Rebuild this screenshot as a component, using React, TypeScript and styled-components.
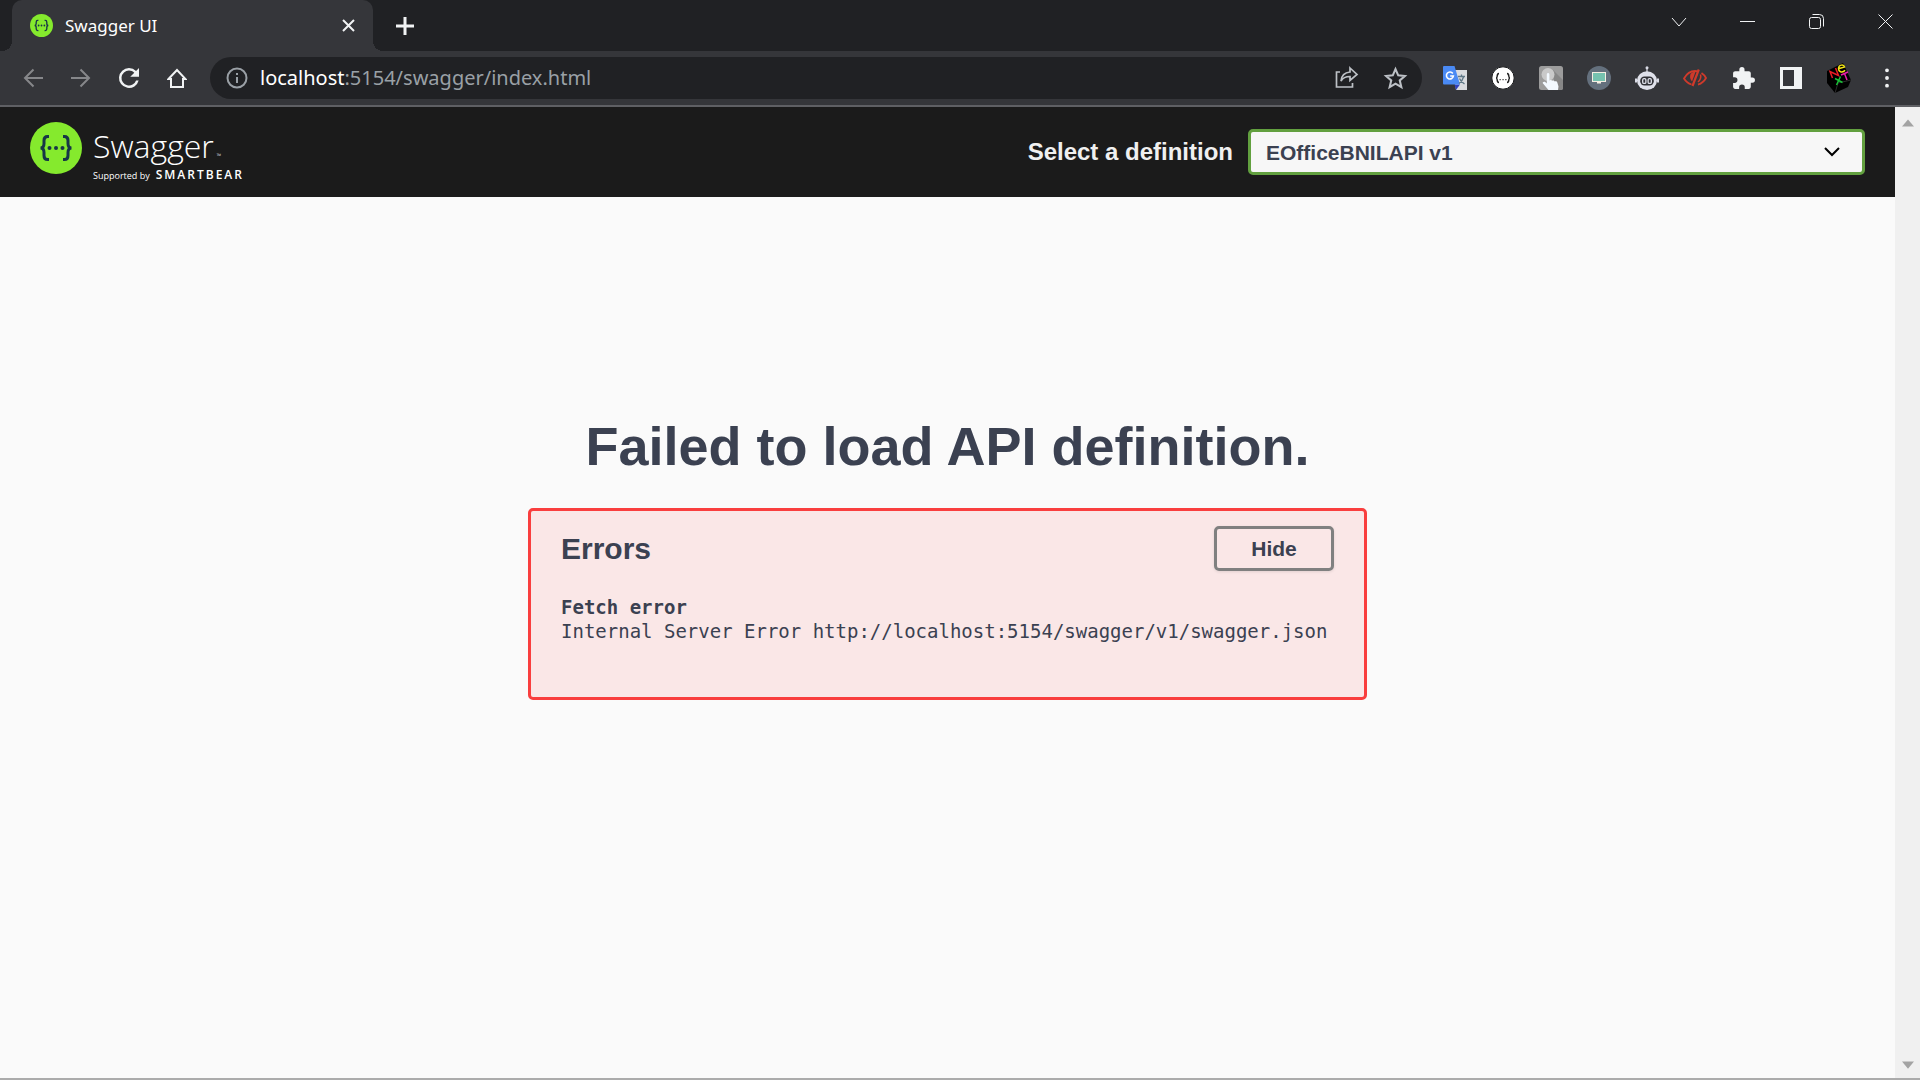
import React, { useState } from 'react';
import styled, { createGlobalStyle } from 'styled-components';

const GlobalStyle = createGlobalStyle`
  *, *::before, *::after { box-sizing: border-box; }
  html, body { margin: 0; height: 100%; }
  #root { height: 100%; }
  body { background: #202124; overflow: hidden; }
  button { font: inherit; color: inherit; }
`;

const ui = `'Segoe UI', 'Noto Sans', 'Open Sans', sans-serif`;
const sans = `'Liberation Sans', Arial, sans-serif`;
const mono = `'DejaVu Sans Mono', monospace`;

const Window = styled.div`
  display: flex;
  flex-direction: column;
  height: 100%;
  font-family: ${ui};
  border-bottom: 2px solid #ababab;
`;

const TabStrip = styled.header`
  display: flex;
  align-items: stretch;
  flex: none;
  height: 51px;
  padding-left: 12px;
  background: #202124;
  color: #fff;
`;

const Tab = styled.div`
  position: relative;
  display: flex;
  align-items: center;
  width: 361px;
  padding: 0 13px 0 18px;
  border-radius: 10px 10px 0 0;
  background: #35363a;
  &::before, &::after {
    content: '';
    position: absolute;
    bottom: 0;
    width: 10px;
    height: 10px;
  }
  &::before {
    right: 100%;
    background: radial-gradient(circle at 0 0, #202124 10px, #35363a 10px);
  }
  &::after {
    left: 100%;
    background: radial-gradient(circle at 100% 0, #202124 10px, #35363a 10px);
  }
`;

const TabTitle = styled.span`
  flex: 1;
  margin-left: 12px;
  font-size: 17px;
  line-height: 24px;
`;

const IconButton = styled.button<{ $w?: number; $color?: string }>`
  display: flex;
  align-items: center;
  justify-content: center;
  flex: none;
  width: ${(p) => p.$w ?? 48}px;
  padding: 0;
  border: 0;
  background: none;
  color: ${(p) => p.$color ?? '#f1f3f4'};
  svg { display: block; }
`;

const NewTab = styled(IconButton)`
  margin-left: 8px;
`;

const WindowControls = styled.div`
  display: flex;
  height: 43px;
  margin-left: auto;
`;

const Toolbar = styled.nav`
  display: flex;
  align-items: stretch;
  flex: none;
  height: 56px;
  padding: 6px 9px;
  border-bottom: 2px solid #5f6064;
  background: #35363a;
`;

const Address = styled.form`
  display: flex;
  align-items: center;
  flex: 1;
  margin: 0 9px;
  padding: 0 3px 0 16px;
  border-radius: 21px;
  background: #202124;
  color: #9aa0a6;
`;

const Url = styled.a`
  flex: 1;
  margin-left: 12px;
  color: #9aa0a6;
  font-size: 20px;
  line-height: 28px;
  text-decoration: none;
  strong { color: #fff; font-weight: 400; }
`;

const Viewport = styled.div`
  display: flex;
  flex: 1;
  min-height: 0;
`;

const Page = styled.main`
  flex: 1;
  background: #fafafa;
  color: #3b4151;
  font-family: ${sans};
`;

const Scrollbar = styled.div`
  display: flex;
  flex-direction: column;
  justify-content: space-between;
  align-items: center;
  width: 25px;
  padding: 10px 0 8px;
  background: #f0f0f0;
  color: #a3a3a3;
  svg { display: block; }
`;

const Topbar = styled.div`
  display: flex;
  align-items: center;
  justify-content: space-between;
  height: 90px;
  padding: 0 30px;
  background: #1b1b1b;
`;

const Logo = styled.a`
  display: flex;
  color: #fff;
  text-decoration: none;
`;

const LogoWords = styled.span`
  display: flex;
  flex-direction: column;
  margin-left: 11px;
  padding-top: 2px;
  font-family: 'Open Sans', sans-serif;
`;

const LogoName = styled.span`
  display: flex;
  align-items: baseline;
  gap: 3px;
  font-size: 32px;
  font-weight: 300;
  line-height: 44px;
  small { font-size: 6px; line-height: 8px; }
`;

const LogoBy = styled.span`
  display: flex;
  align-items: baseline;
  gap: 6px;
  font-size: 9px;
  line-height: 14px;
  strong { font-size: 12px; font-weight: 600; letter-spacing: 2px; }
`;

const Definition = styled.label`
  display: flex;
  align-items: center;
  gap: 15px;
  color: #f0f0f0;
  font-size: 24px;
  font-weight: 700;
`;

const SelectFrame = styled.span`
  display: grid;
  align-items: center;
  width: 617px;
  color: #000;
  > * { grid-area: 1 / 1; }
  > svg { justify-self: end; margin-right: 25px; pointer-events: none; }
`;

const Select = styled.select`
  appearance: none;
  width: 100%;
  height: 46px;
  padding: 0 50px 0 15px;
  border: 3px solid #62a03f;
  border-radius: 5px;
  background: #f7f7f7;
  color: #3b4151;
  font-family: ${sans};
  font-size: 21px;
  font-weight: 700;
`;

const Failure = styled.section`
  display: flex;
  flex-direction: column;
  align-items: center;
  padding-top: 217px;
`;

const Title = styled.h1`
  margin: 0;
  font-size: 54px;
  line-height: 64px;
`;

const ErrorBox = styled.div`
  min-width: 839px;
  margin-top: 30px;
  padding: 15px 30px 54px;
  border: 3px solid #f93e3e;
  border-radius: 5px;
  background: #fae7e7;
`;

const ErrorHead = styled.div`
  display: flex;
  align-items: center;
  justify-content: space-between;
`;

const ErrorTitle = styled.h2`
  margin: 0;
  font-size: 30px;
  line-height: 36px;
`;

const HideButton = styled.button`
  width: 120px;
  height: 45px;
  border: 3px solid #808080;
  border-radius: 5px;
  background: transparent;
  box-shadow: 0 1px 3px rgba(0, 0, 0, 0.1);
  font-size: 21px;
  font-weight: 700;
`;

const ErrorText = styled.p`
  margin: 24px 0 0;
  font-family: ${mono};
  font-size: 19px;
  line-height: 24px;
  strong { display: block; }
`;

type IconProps = { size?: number };

const SwaggerMark = ({ size = 52 }: IconProps) => (
  <svg width={size} height={size} viewBox="0 0 52 52" aria-hidden="true">
    <circle cx="26" cy="26" r="26" fill="#85ea2d" />
    <g fill="none" stroke="#173647" strokeWidth="3">
      <path d="M19 14.5h-1.500c-3 0-3.500 1.500-3.500 4v3c0 3-1 4.500-3.500 4.500 2.500 0 3.500 1.500 3.500 4.500v3c0 2.500.5 4 3.500 4H19" />
      <path d="M33 14.500h1.500c3 0 3.500 1.500 3.500 4v3c0 3 1 4.500 3.500 4.500-2.500 0-3.500 1.500-3.500 4.500v3c0 2.500-.5 4-3.500 4H33" />
    </g>
    <g fill="#173647">
      <circle cx="19.500" cy="26" r="2" /><circle cx="26" cy="26" r="2" /><circle cx="32.500" cy="26" r="2" />
    </g>
  </svg>
);

const Glyph = ({ d, size = 24, width = 2, box = 24, fill = 'none' }: { d: string; size?: number; width?: number; box?: number; fill?: string }) => (
  <svg width={size} height={size} viewBox={`0 0 ${box} ${box}`} fill={fill} stroke={fill === 'none' ? 'currentColor' : 'none'} strokeWidth={width} aria-hidden="true">
    <path d={d} fillRule="evenodd" />
  </svg>
);

const TranslateIcon = () => (
  <svg width="24" height="24" viewBox="0 0 24 24" aria-hidden="true">
    <path d="M10 4h14v20H13z" fill="#dadce0" />
    <path d="M11.500 18.500h5.500l-4 5.500z" fill="#3041be" />
    <path d="M1 0h10.500l5.500 18.500H1a1 1 0 0 1-1-1V1a1 1 0 0 1 1-1z" fill="#4a8af4" />
    <path d="M9.800 7.500A3.500 3.500 0 1 0 10.400 10H7.200" fill="none" stroke="#fff" strokeWidth="1.600" />
    <path d="M15 10.500h7M18.500 8.500v2M20.500 11c-.7 3-2.500 5-4.500 6.500M16.500 12.500c1 2.500 3 4 5 5.500" fill="none" stroke="#607988" strokeWidth="1.300" />
  </svg>
);

const BracesIcon = () => (
  <svg width="24" height="24" viewBox="0 0 24 24" aria-hidden="true">
    <circle cx="12" cy="12" r="11.200" fill="#fff" stroke="#17181a" strokeWidth="1" />
    <path d="M8 7.500c-3 0-.7 4.500-3 4.500 2.300 0 0 4.500 3 4.500M16 7.500c3 0 .7 4.500 3 4.500-2.300 0 0 4.500-3 4.500" fill="none" stroke="#222" strokeWidth="1.500" />
    <path d="M8.500 13h1.300v1.300H8.500zM11.400 13h1.300v1.300h-1.300zM14.200 13h1.300v1.300h-1.300z" fill="#444" />
  </svg>
);

const TouchIcon = () => (
  <svg width="24" height="24" viewBox="0 0 24 24" aria-hidden="true">
    <rect width="24" height="24" rx="2.500" fill="#9c9c9c" />
    <path d="M14 4l10 10v8a2 2 0 0 1-2 2h-6z" fill="#868686" />
    <circle cx="9" cy="8.500" r="6.500" fill="#c9c9c9" />
    <path d="M7.800 8.500c0-2 2.600-2 2.600 0v6c.6-.9 2.400-.8 2.700.3.700-.7 2.200-.5 2.500.6.900-.6 2.500-.2 2.700 1.200l1.200 3.900-.5 3.500H9.500L4 17.600c-1-1.500 1-2.600 2.200-1.500l1.600 1.400z" fill="#f3f9ff" />
  </svg>
);

const ScreenIcon = () => (
  <svg width="24" height="24" viewBox="0 0 24 24" aria-hidden="true">
    <circle cx="12" cy="12" r="12" fill="#64707d" />
    <rect x="5" y="6" width="14" height="10" fill="#f4eee2" />
    <rect x="6" y="7" width="12" height="8" fill="#76c2af" />
    <path d="M10 16h4v1.500h-4z" fill="#f4eee2" />
  </svg>
);

const BotIcon = () => (
  <svg width="24" height="24" viewBox="0 0 24 24" aria-hidden="true">
    <path d="M12 1v5" stroke="#dadce6" strokeWidth="1.200" />
    <circle cx="12" cy="1.700" r="1.500" fill="#dadce6" />
    <ellipse cx="12" cy="14.600" rx="10" ry="9.300" fill="#dfe1ea" />
    <path d="M0 12.500h2v4H0zM22 12.500h2v4h-2z" fill="#dadce6" />
    <rect x="5.200" y="10.500" width="13.600" height="9" rx="4.200" fill="#303136" />
    <rect x="7.700" y="12.700" width="3.200" height="4.700" rx="1.200" fill="none" stroke="#dfe1ea" strokeWidth="1.300" />
    <rect x="13.100" y="12.700" width="3.200" height="4.700" rx="1.200" fill="none" stroke="#dfe1ea" strokeWidth="1.300" />
  </svg>
);

const HiddenEyeIcon = () => (
  <svg width="24" height="24" viewBox="0 0 24 24" fill="none" stroke="#cf3a2b" strokeWidth="1.800" aria-hidden="true">
    <path d="M8.500 18.500C5 17.500 2.500 15 1 12.500 3.500 8 7.500 5 12 5c1 0 2 .1 3 .4M18.500 7c2 1.300 3.500 3 4.500 5-1.800 3.300-4.500 5.500-8 6.700" />
    <path d="M15.800 3.500L9.500 20" strokeWidth="2.200" />
    <path d="M7.500 8c.8-1.500 3-2.500 5-2.300L9 15.500C7 13.500 6.700 10.500 7.500 8z" fill="#cf3a2b" stroke="none" />
    <path d="M17.500 8.500c.8 3-.3 5.500-2.500 7.500" strokeWidth="1.500" />
  </svg>
);

const NextIcon = () => (
  <svg width="26" height="32" viewBox="0 0 26 32" fill="none" strokeWidth="1.500" aria-hidden="true">
    <path d="M1 9L17 1l8 17-3 7L9 31 1 21z" fill="#000" />
    <path d="M9 31l3-10 13-3" stroke="#2c2c2c" strokeWidth="1" />
    <path d="M6.500 16L4 9.500l8.500 4L9.500 6" stroke="#ea1c24" />
    <path d="M12.500 6.800l6-1.800c-.8-3-5.800-2.500-6 1.500.2 4 4.500 4.500 6.500 1.800" stroke="#f2e416" />
    <path d="M15 13l7-3M18.500 11.500l2.500 6.500" stroke="#e81caa" />
    <path d="M9 16.500l7.500 4M14.500 14.500L10.500 23" stroke="#19c337" />
  </svg>
);

const puzzle = 'M20.500 11H19V7c0-1.100-.9-2-2-2h-4V3.500a2.500 2.500 0 0 0-5 0V5H4c-1.100 0-2 .9-2 2v3.800h1.500a2.700 2.700 0 0 1 0 5.400H2V20c0 1.100.9 2 2 2h3.800v-1.500a2.700 2.700 0 0 1 5.400 0V22H17c1.100 0 2-.9 2-2v-4h1.500a2.500 2.500 0 0 0 0-5z';
const reload = 'M17.650 6.350A7.958 7.958 0 0 0 12 4a8 8 0 1 0 7.730 10h-2.080A6 6 0 1 1 12 6c1.660 0 3.140.69 4.220 1.780L13 11h7V4z';

const extensions = [
  { name: 'Translate', icon: <TranslateIcon /> },
  { name: 'JSON viewer', icon: <BracesIcon /> },
  { name: 'Touch', icon: <TouchIcon /> },
  { name: 'Screen', icon: <ScreenIcon /> },
  { name: 'Assistant', icon: <BotIcon /> },
  { name: 'Hide', icon: <HiddenEyeIcon /> },
  { name: 'Extensions', icon: <Glyph d={puzzle} size={25} fill="currentColor" /> },
  { name: 'Side panel', icon: <Glyph d="M0 0h22v22H0zM3 3v16h11V3z" size={22} box={22} fill="currentColor" /> },
  { name: 'Profile', icon: <NextIcon /> },
];

export default function App() {
  const [open, setOpen] = useState(true);
  return (
    <Window>
      <GlobalStyle />
      <TabStrip>
        <Tab>
          <SwaggerMark size={23} />
          <TabTitle>Swagger UI</TabTitle>
          <IconButton $w={24} aria-label="Close tab"><Glyph d="M1 1l11 11M12 1L1 12" size={13} box={13} /></IconButton>
        </Tab>
        <NewTab aria-label="New tab"><Glyph d="M9 0v18M0 9h18" size={18} box={18} width={3} /></NewTab>
        <WindowControls>
          <IconButton $w={68} aria-label="Search tabs"><Glyph d="M1 4l7 8 7-8" size={16} box={16} width={1} /></IconButton>
          <IconButton $w={69} aria-label="Minimize"><Glyph d="M0 7.500h15" size={15} box={15} width={1} /></IconButton>
          <IconButton $w={69} aria-label="Restore"><Glyph d="M2.500 3.500h7a2 2 0 0 1 2 2v7a2 2 0 0 1-2 2h-7a2 2 0 0 1-2-2v-7a2 2 0 0 1 2-2zM3.500 .5h7a4 4 0 0 1 4 4v8" size={15} box={15} width={1} /></IconButton>
          <IconButton $w={69} aria-label="Close"><Glyph d="M.5 .5l14 14M14.500 .5l-14 14" size={15} box={15} width={1} /></IconButton>
        </WindowControls>
      </TabStrip>
      <Toolbar>
        <IconButton aria-label="Back" $color="#86878a"><Glyph d="M20 10H2M10.500 1.500L2 10l8.500 8.500" size={20} box={20} /></IconButton>
        <IconButton aria-label="Forward" $color="#86878a"><Glyph d="M0 10h18M9.500 1.500L18 10l-8.500 8.500" size={20} box={20} /></IconButton>
        <IconButton aria-label="Reload"><Glyph d={reload} size={30} fill="currentColor" /></IconButton>
        <IconButton aria-label="Home"><Glyph d="M1.500 11L10 2l8.500 9H16v8H4v-8z" size={20} box={20} width={2} /></IconButton>
        <Address>
          <Glyph d="M11 1.500a9.500 9.500 0 1 0 0 19 9.500 9.500 0 0 0 0-19zM11 10v6M11 6v2" size={22} box={22} />
          <Url href="http://localhost:5154/swagger/index.html"><strong>localhost</strong>:5154/swagger/index.html</Url>
          <IconButton type="button" aria-label="Share" $color="#bdc1c6"><Glyph d="M5 6H1.500v15h16v-4M15 2l7 6.500-7 6v-4c-4.500 0-7 1-9 4.500.5-5.500 3.500-8.500 9-9z" size={24} box={24} width={1.700} /></IconButton>
          <IconButton type="button" aria-label="Bookmark" $color="#bdc1c6"><Glyph d="M12 3l2.600 6 6.400.6-4.900 4.300 1.500 6.400-5.600-3.400-5.600 3.400 1.500-6.400L3 9.600 9.400 9z" size={25} width={2} /></IconButton>
        </Address>
        {extensions.map((e) => (
          <IconButton key={e.name} aria-label={e.name}>{e.icon}</IconButton>
        ))}
        <IconButton aria-label="Menu"><Glyph d="M12 .5a2.300 2.300 0 1 1 0 4.600 2.300 2.300 0 0 1 0-4.600zM12 9.700a2.300 2.300 0 1 1 0 4.600 2.300 2.300 0 0 1 0-4.600zM12 18.900a2.300 2.300 0 1 1 0 4.600 2.300 2.300 0 0 1 0-4.600z" size={20} fill="currentColor" /></IconButton>
      </Toolbar>
      <Viewport>
        <Page>
          <Topbar>
            <Logo href="#" aria-label="Swagger">
              <SwaggerMark />
              <LogoWords>
                <LogoName>Swagger<small>™</small></LogoName>
                <LogoBy>Supported by <strong>SMARTBEAR</strong></LogoBy>
              </LogoWords>
            </Logo>
            <Definition htmlFor="definition">
              <span>Select a definition</span>
              <SelectFrame>
                <Select id="definition" defaultValue="v1"><option value="v1">EOfficeBNILAPI v1</option></Select>
                <Glyph d="M1 4l7 7 7-7" size={16} box={16} />
              </SelectFrame>
            </Definition>
          </Topbar>
          <Failure>
            <Title>Failed to load API definition.</Title>
            <ErrorBox>
              <ErrorHead>
                <ErrorTitle>Errors</ErrorTitle>
                <HideButton onClick={() => setOpen(!open)}>{open ? 'Hide' : 'Show'}</HideButton>
              </ErrorHead>
              {open && (
                <ErrorText>
                  <strong>Fetch error</strong>
                  Internal Server Error http://localhost:5154/swagger/v1/swagger.json
                </ErrorText>
              )}
            </ErrorBox>
          </Failure>
        </Page>
        <Scrollbar>
          <Glyph d="M0 8l5-6 5 6z" size={12} box={10} fill="currentColor" />
          <Glyph d="M0 3h10l-5 6z" size={12} box={10} fill="currentColor" />
        </Scrollbar>
      </Viewport>
    </Window>
  );
}
